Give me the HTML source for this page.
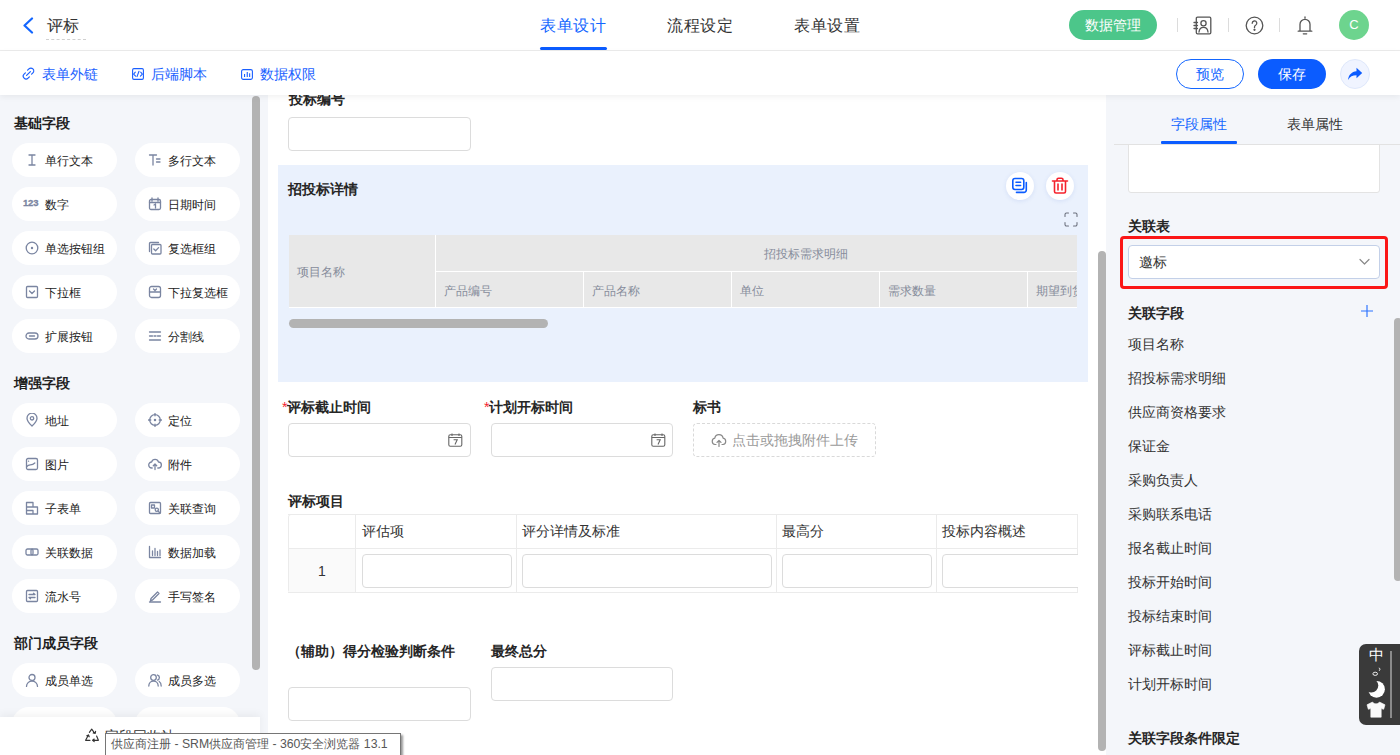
<!DOCTYPE html>
<html><head><meta charset="utf-8">
<style>
*{box-sizing:border-box;margin:0;padding:0}
html,body{width:1400px;height:755px;overflow:hidden;background:#fff;font-family:"Liberation Sans",sans-serif;color:#333}
.a{position:absolute;white-space:nowrap}
.t14{font-size:14px;line-height:20px}
.b{font-weight:bold}
/* header */
#hdr{position:absolute;left:0;top:0;width:1400px;height:51px;background:#fff;border-bottom:1px solid #ececec}
#tb{position:absolute;left:0;top:51px;width:1400px;height:44px;background:#fff;z-index:3;box-shadow:0 2px 6px rgba(0,0,0,0.06)}
#left{position:absolute;left:0;top:95px;width:268px;height:660px;background:#f4f6fa;overflow:hidden}
#canvas{position:absolute;left:268px;top:95px;width:838px;height:660px;background:#fff;overflow:hidden}
#right{position:absolute;left:1106px;top:95px;width:294px;height:660px;background:#f4f6fa;overflow:hidden}
.pill{position:absolute;width:105px;height:34px;border-radius:17px;background:#fff}
.pill span{position:absolute;left:32px;top:7px;font-size:13px;line-height:20px;color:#222}
.pill i{position:absolute;left:12px;top:10px;width:14px;height:14px}
.pill span{position:absolute;left:32px;top:1px;font-size:12px;line-height:34px;color:#222}
.sec{position:absolute;left:14px;font-size:14px;font-weight:bold;color:#1f1f1f;line-height:20px}
.inp{position:absolute;height:34px;border:1px solid #dcdcdc;border-radius:4px;background:#fff}
.lbl{position:absolute;font-size:14px;font-weight:bold;color:#262626;line-height:20px}
.star{color:#f5222d;font-weight:normal}
.rl{left:1128px;font-size:14px;line-height:20px;color:#333}
.tc{font-size:14px;line-height:20px;color:#333}
.th{font-size:12px;line-height:16px;color:#868c9b}
.pill i{font-style:normal}
.pr i{left:13px}.pr span{left:33px}.pl i{left:13px}.pl span{left:33px}
.gt{position:absolute;left:0;top:0;border-collapse:collapse;table-layout:fixed;width:808px}
.gt td{border:1px solid #ececec;font-size:14px;color:#333;padding:0 0 0 6px;vertical-align:middle;position:relative}
.gt td.num{background:#fafafa;text-align:center;padding:0}
.ci{width:150px;height:34px;border:1px solid #dcdcdc;border-radius:4px;background:#fff}
</style></head><body>
<div id="hdr">
  <svg class="a" style="left:22px;top:17px" width="12" height="17" viewBox="0 0 12 17"><path d="M10 1.5 L2.5 8.5 L10 15.5" fill="none" stroke="#1366ff" stroke-width="2.2" stroke-linecap="round" stroke-linejoin="round"/></svg>
  <div class="a" style="left:47px;top:16px;font-size:16px;line-height:20px;color:#333">评标</div>
  <div class="a" style="left:46px;top:39px;width:40px;border-top:1px dashed #d0d0d0"></div>
  <div class="a" style="left:540px;top:16px;font-size:16px;letter-spacing:0.6px;line-height:20px;color:#1366ff">表单设计</div>
  <div class="a" style="left:540px;top:47px;width:67px;height:3px;border-radius:2px;background:#0b5cff"></div>
  <div class="a" style="left:667px;top:16px;font-size:16px;letter-spacing:0.6px;line-height:20px;color:#333">流程设定</div>
  <div class="a" style="left:794px;top:16px;font-size:16px;letter-spacing:0.6px;line-height:20px;color:#333">表单设置</div>
  <div class="a" style="left:1069px;top:10px;width:88px;height:30px;border-radius:15px;background:#4cc68a;color:#fff;font-size:14px;line-height:30px;text-align:center">数据管理</div>
  <div class="a" style="left:1177px;top:18px;width:1px;height:14px;background:#dcdcdc"></div>
  <div class="a" style="left:1228px;top:18px;width:1px;height:14px;background:#dcdcdc"></div>
  <div class="a" style="left:1279px;top:18px;width:1px;height:14px;background:#dcdcdc"></div>

  <svg class="a" style="left:1193px;top:16px" width="19" height="19" viewBox="0 0 19 19" fill="none" stroke="#555" stroke-width="1.3" stroke-linecap="round" stroke-linejoin="round"><rect x="3.3" y="1.2" width="14.5" height="16.6" rx="1.2"/><path d="M1 6.5h3.5M1 9.5h3.5M1 12.5h3.5"/><circle cx="10.5" cy="7.3" r="2.6"/><path d="M6 16c0.3-2.8 2.1-4.6 4.5-4.6s4.2 1.8 4.5 4.6"/></svg>
  <svg class="a" style="left:1245px;top:16px" width="19" height="19" viewBox="0 0 19 19" fill="none" stroke="#555" stroke-width="1.3" stroke-linecap="round"><circle cx="9.5" cy="9.5" r="8.3"/><path d="M7.2 7.3a2.3 2.3 0 1 1 3.4 2c-0.8 0.5-1.1 0.9-1.1 1.8v0.6"/><circle cx="9.5" cy="13.8" r="0.5" fill="#555"/></svg>
  <svg class="a" style="left:1297px;top:16px" width="16" height="19" viewBox="0 0 16 19" fill="none" stroke="#555" stroke-width="1.3" stroke-linecap="round" stroke-linejoin="round"><path d="M8 1v1.3M3 15V8.3a5 5 0 0 1 10 0V15M1.2 15.2h13.6M6.3 17.8h3.4"/></svg>
  <div class="a" style="left:1339px;top:10px;width:30px;height:30px;border-radius:15px;background:#6dd48e;color:#fff;font-size:13px;line-height:30px;text-align:center">C</div>
</div>
<div id="tb">
  <div class="a t14" style="left:42px;top:13px;color:#1a5fff">表单外链</div>
  <div class="a t14" style="left:151px;top:13px;color:#1a5fff">后端脚本</div>
  <div class="a t14" style="left:260px;top:13px;color:#1a5fff">数据权限</div>
  <div class="a" style="left:1176px;top:8px;width:68px;height:30px;border-radius:15px;border:1px solid #1366ff;color:#1366ff;font-size:14px;line-height:28px;text-align:center">预览</div>
  <div class="a" style="left:1258px;top:8px;width:68px;height:30px;border-radius:15px;background:#0b5cff;color:#fff;font-size:14px;line-height:30px;text-align:center">保存</div>
  <div class="a" style="left:1340px;top:8px;width:30px;height:30px;border-radius:15px;background:#f0f4ff;border:1px solid #dfe8fb"></div>

  <svg class="a" style="left:22px;top:16px" width="13" height="13" viewBox="0 0 13 13" fill="none" stroke="#1a5fff" stroke-width="1.2" stroke-linecap="round"><path d="M5.6 3.2l1.3-1.3a2.8 2.8 0 0 1 4 4L9.6 7.2M7.4 9.8L6.1 11.1a2.8 2.8 0 0 1-4-4L3.4 5.8M4.6 8.4l3.8-3.8"/></svg>
  <svg class="a" style="left:132px;top:17px" width="12" height="12" viewBox="0 0 12 12" fill="none" stroke="#1a5fff" stroke-width="1.1" stroke-linecap="round" stroke-linejoin="round"><rect x="0.6" y="0.6" width="10.8" height="10.8" rx="1.3"/><path d="M3.3 4.2L1.6 6.1l2 2M8.7 4.2l1.7 1.9-2 2M7 3.2L5 8.6"/></svg>
  <svg class="a" style="left:241px;top:18px" width="12" height="11" viewBox="0 0 12 11"><rect x="0.6" y="0.6" width="10.8" height="9.8" rx="1.6" fill="none" stroke="#1a5fff" stroke-width="1.1"/><rect x="3" y="5" width="1.1" height="3" fill="#1a5fff"/><rect x="5.7" y="3" width="1.1" height="5" fill="#1a5fff"/><rect x="8.1" y="4.3" width="1.1" height="3.7" fill="#1a5fff"/></svg>
  <svg class="a" style="left:1347px;top:16px" width="16" height="14" viewBox="0 0 16 14" fill="#0b5cff"><path d="M9.5 0.8L15.2 6 9.5 11.2V8.2C5.5 8.2 3 9.5 1 13c0.6-5.2 3.5-8.3 8.5-8.8z"/></svg>
</div>
<div id="left">
<div class="sec" style="top:18px">基础字段</div>
<div class="pill pl" style="left:12px;top:48px"><i><svg width="14" height="14" viewBox="0 0 14 14" fill="none" stroke="#7a85a1" stroke-width="1.3" stroke-linecap="round" stroke-linejoin="round"><path d="M4 2h6M4 12h6M7 2v10"/></svg></i><span>单行文本</span></div>
<div class="pill pr" style="left:135px;top:48px"><i><svg width="14" height="14" viewBox="0 0 14 14" fill="none" stroke="#7a85a1" stroke-width="1.3" stroke-linecap="round" stroke-linejoin="round"><path d="M1.5 2h7M5 2v10M8.5 6h3.5M8.5 9h3.5"/></svg></i><span>多行文本</span></div>
<div class="pill pl" style="left:12px;top:92px"><i><span style="position:absolute;left:-2px;top:-1px;font-size:9.5px;font-weight:bold;color:#7a85a1;line-height:14px;letter-spacing:-0.2px;-webkit-text-stroke:0.3px #7a85a1">123</span></i><span>数字</span></div>
<div class="pill pr" style="left:135px;top:92px"><i><svg width="14" height="14" viewBox="0 0 14 14" fill="none" stroke="#7a85a1" stroke-width="1.3" stroke-linecap="round" stroke-linejoin="round"><rect x="1.5" y="2.5" width="11" height="10" rx="1.5"/><path d="M4 1v3M10 1v3M1.5 5.5h11M6 8l1.5-1v4"/></svg></i><span>日期时间</span></div>
<div class="pill pl" style="left:12px;top:136px"><i><svg width="14" height="14" viewBox="0 0 14 14" fill="none" stroke="#7a85a1" stroke-width="1.3" stroke-linecap="round" stroke-linejoin="round"><circle cx="7" cy="7" r="5.8"/><circle cx="7" cy="7" r="1.2" fill="#7a85a1" stroke="none"/></svg></i><span>单选按钮组</span></div>
<div class="pill pr" style="left:135px;top:136px"><i><svg width="14" height="14" viewBox="0 0 14 14" fill="none" stroke="#7a85a1" stroke-width="1.3" stroke-linecap="round" stroke-linejoin="round"><path d="M1.5 10.5V2.5a1 1 0 0 1 1-1h8"/><rect x="3.5" y="3.5" width="9.5" height="9.5" rx="1"/><path d="M5.8 8l1.8 1.8 3-3.2"/></svg></i><span>复选框组</span></div>
<div class="pill pl" style="left:12px;top:180px"><i><svg width="14" height="14" viewBox="0 0 14 14" fill="none" stroke="#7a85a1" stroke-width="1.3" stroke-linecap="round" stroke-linejoin="round"><rect x="1.5" y="1.5" width="11" height="11" rx="1"/><path d="M4.5 6l2.5 2.5L9.5 6"/></svg></i><span>下拉框</span></div>
<div class="pill pr" style="left:135px;top:180px"><i><svg width="14" height="14" viewBox="0 0 14 14" fill="none" stroke="#7a85a1" stroke-width="1.3" stroke-linecap="round" stroke-linejoin="round"><rect x="1.5" y="1.5" width="11" height="11" rx="2"/><path d="M1.5 7h11M5.5 4l1.5 1.5L8.5 4"/></svg></i><span>下拉复选框</span></div>
<div class="pill pl" style="left:12px;top:224px"><i><svg width="14" height="14" viewBox="0 0 14 14" fill="none" stroke="#7a85a1" stroke-width="1.3" stroke-linecap="round" stroke-linejoin="round"><rect x="1" y="4" width="12" height="6" rx="3"/><path d="M4.5 7h5"/></svg></i><span>扩展按钮</span></div>
<div class="pill pr" style="left:135px;top:224px"><i><svg width="14" height="14" viewBox="0 0 14 14" fill="none" stroke="#7a85a1" stroke-width="1.3" stroke-linecap="round" stroke-linejoin="round"><path d="M1.5 3h11M1.5 11h11M1.5 7h3M6 7h2M9.5 7h3"/></svg></i><span>分割线</span></div>
<div class="sec" style="top:278px">增强字段</div>
<div class="pill pl" style="left:12px;top:308px"><i><svg width="14" height="14" viewBox="0 0 14 14" fill="none" stroke="#7a85a1" stroke-width="1.3" stroke-linecap="round" stroke-linejoin="round"><path d="M7 13s-5-4.6-5-7.8A5 5 0 0 1 12 5.2C12 8.4 7 13 7 13z"/><circle cx="7" cy="5.3" r="1.7"/></svg></i><span>地址</span></div>
<div class="pill pr" style="left:135px;top:308px"><i><svg width="14" height="14" viewBox="0 0 14 14" fill="none" stroke="#7a85a1" stroke-width="1.3" stroke-linecap="round" stroke-linejoin="round"><circle cx="7" cy="7" r="5.3"/><path d="M7 0.5v2.3M7 11.2v2.3M0.5 7h2.3M11.2 7h2.3"/><circle cx="7" cy="7" r="0.6" fill="#7a85a1"/></svg></i><span>定位</span></div>
<div class="pill pl" style="left:12px;top:352px"><i><svg width="14" height="14" viewBox="0 0 14 14" fill="none" stroke="#7a85a1" stroke-width="1.3" stroke-linecap="round" stroke-linejoin="round"><rect x="1.5" y="1.5" width="11" height="11" rx="1.5"/><path d="M1.8 9.5c2.5-3 4.5 0 8-3.5M3.5 4.2h.1"/></svg></i><span>图片</span></div>
<div class="pill pr" style="left:135px;top:352px"><i><svg width="14" height="14" viewBox="0 0 14 14" fill="none" stroke="#7a85a1" stroke-width="1.3" stroke-linecap="round" stroke-linejoin="round"><path d="M4.2 11H3.8A3 3 0 0 1 3.6 5a3.6 3.6 0 0 1 6.9 0A3 3 0 0 1 10.2 11H9.8M7 7v5.5M5.3 8.7L7 7l1.7 1.7"/></svg></i><span>附件</span></div>
<div class="pill pl" style="left:12px;top:396px"><i><svg width="14" height="14" viewBox="0 0 14 14" fill="none" stroke="#7a85a1" stroke-width="1.3" stroke-linecap="round" stroke-linejoin="round"><path d="M1.5 13V1.5h6.5V6M1.5 6h11v7h-11M1.5 9.5h6.5V13"/></svg></i><span>子表单</span></div>
<div class="pill pr" style="left:135px;top:396px"><i><svg width="14" height="14" viewBox="0 0 14 14" fill="none" stroke="#7a85a1" stroke-width="1.3" stroke-linecap="round" stroke-linejoin="round"><rect x="1.5" y="1.5" width="11" height="11" rx="1"/><rect x="3.5" y="4" width="3" height="3"/><circle cx="8.8" cy="8.8" r="1.6"/><path d="M10 10l2 2"/></svg></i><span>关联查询</span></div>
<div class="pill pl" style="left:12px;top:440px"><i><svg width="14" height="14" viewBox="0 0 14 14" fill="none" stroke="#7a85a1" stroke-width="1.3" stroke-linecap="round" stroke-linejoin="round"><rect x="1" y="4" width="7" height="6" rx="1.5"/><rect x="6" y="4" width="7" height="6" rx="1.5"/></svg></i><span>关联数据</span></div>
<div class="pill pr" style="left:135px;top:440px"><i><svg width="14" height="14" viewBox="0 0 14 14" fill="none" stroke="#7a85a1" stroke-width="1.3" stroke-linecap="round" stroke-linejoin="round"><path d="M1.5 1.5v11h11M4.5 6v4.5M7 3.5v7M9.5 6.5v4M12 5v5.5"/></svg></i><span>数据加载</span></div>
<div class="pill pl" style="left:12px;top:484px"><i><svg width="14" height="14" viewBox="0 0 14 14" fill="none" stroke="#7a85a1" stroke-width="1.3" stroke-linecap="round" stroke-linejoin="round"><rect x="1.5" y="1.5" width="11" height="11" rx="1"/><path d="M4 5.5h6l-1.5-1.2M10 8.5H4l1.5 1.2"/></svg></i><span>流水号</span></div>
<div class="pill pr" style="left:135px;top:484px"><i><svg width="14" height="14" viewBox="0 0 14 14" fill="none" stroke="#7a85a1" stroke-width="1.3" stroke-linecap="round" stroke-linejoin="round"><path d="M3 9.5l6.5-6.5 1.5 1.5L4.5 11 2.5 11.5zM1.5 13h11"/></svg></i><span>手写签名</span></div>
<div class="sec" style="top:538px">部门成员字段</div>
<div class="pill pl" style="left:12px;top:568px"><i><svg width="14" height="14" viewBox="0 0 14 14" fill="none" stroke="#7a85a1" stroke-width="1.3" stroke-linecap="round" stroke-linejoin="round"><circle cx="7" cy="4.5" r="3"/><path d="M1.5 13.5c0-3 2.5-5.5 5.5-5.5s5.5 2.5 5.5 5.5"/></svg></i><span>成员单选</span></div>
<div class="pill pr" style="left:135px;top:568px"><i><svg width="14" height="14" viewBox="0 0 14 14" fill="none" stroke="#7a85a1" stroke-width="1.3" stroke-linecap="round" stroke-linejoin="round"><circle cx="5.5" cy="4.5" r="2.8"/><path d="M0.8 13c0-2.8 2.1-5 4.7-5s4.7 2.2 4.7 5M9.5 2a2.6 2.6 0 0 1 0 5M11.2 8.5c1.3 0.8 2 2.5 2 4.5"/></svg></i><span>成员多选</span></div>
<div class="pill pl" style="left:12px;top:612px"><i></i><span></span></div>
<div class="pill pr" style="left:135px;top:612px"><i></i><span></span></div>
</div>
<div id="canvas"></div>
<!-- canvas -->
<div class="lbl" style="left:289px;top:89px">投标编号</div>
<div class="inp" style="left:288px;top:117px;width:183px"></div>
<div class="a" style="left:278px;top:165px;width:810px;height:217px;background:#eaf1fd"></div>
<div class="lbl" style="left:288px;top:179px">招投标详情</div>
<div class="a" style="left:1006px;top:172px;width:28px;height:28px;border-radius:14px;background:#fff;box-shadow:0 1px 4px rgba(60,100,200,0.12)"></div>
<svg class="a" style="left:1011px;top:177px" width="18" height="18" viewBox="0 0 18 18" fill="none" stroke="#0b5cff" stroke-width="1.6" stroke-linecap="round" stroke-linejoin="round"><rect x="1.8" y="1.5" width="11" height="11" rx="2.2"/><path d="M5 5.3h4.6M5 8.5h4.6M15.3 5.5v7.5a2.4 2.4 0 0 1-2.4 2.4H5.5"/></svg>
<div class="a" style="left:1046px;top:172px;width:28px;height:28px;border-radius:14px;background:#fff;box-shadow:0 1px 4px rgba(60,100,200,0.12)"></div>
<svg class="a" style="left:1051px;top:177px" width="18" height="18" viewBox="0 0 18 18" fill="none" stroke="#f5222d" stroke-width="1.6" stroke-linecap="round" stroke-linejoin="round"><path d="M1.5 4h15M6 4V2.8a1.5 1.5 0 0 1 1.5-1.5h3a1.5 1.5 0 0 1 1.5 1.5V4M3.5 4v10.5a1.5 1.5 0 0 0 1.5 1.5h8a1.5 1.5 0 0 0 1.5-1.5V4M7 7v6M11 7v6"/></svg>
<svg class="a" style="left:1064px;top:212px" width="14" height="15" viewBox="0 0 14 15" fill="none" stroke="#6a6f7c" stroke-width="1.05" stroke-linecap="round"><path d="M1 4.5V2.5A1.5 1.5 0 0 1 2.5 1H4.5M9.5 1h2A1.5 1.5 0 0 1 13 2.5v2M13 10.5v2a1.5 1.5 0 0 1-1.5 1.5h-2M4.5 14h-2A1.5 1.5 0 0 1 1 12.5v-2"/></svg>
<div class="a" style="left:289px;top:235px;width:788px;height:73px;overflow:hidden;background:#fff">
  <div class="a" style="left:0;top:0;width:146px;height:72px;background:#e8e8e8"></div>
  <div class="a" style="left:147px;top:0;width:800px;height:36px;background:#e8e8e8"></div>
  <div class="a th" style="left:8px;top:29px">项目名称</div>
  <div class="a th" style="left:475px;top:11px">招投标需求明细</div>
  <div class="a" style="left:147px;top:37px;width:147px;height:35px;background:#e8e8e8"></div>
  <div class="a" style="left:295px;top:37px;width:147px;height:35px;background:#e8e8e8"></div>
  <div class="a" style="left:443px;top:37px;width:147px;height:35px;background:#e8e8e8"></div>
  <div class="a" style="left:591px;top:37px;width:147px;height:35px;background:#e8e8e8"></div>
  <div class="a" style="left:739px;top:37px;width:147px;height:35px;background:#e8e8e8"></div>
  <div class="a th" style="left:155px;top:48px">产品编号</div>
  <div class="a th" style="left:303px;top:48px">产品名称</div>
  <div class="a th" style="left:451px;top:48px">单位</div>
  <div class="a th" style="left:599px;top:48px">需求数量</div>
  <div class="a th" style="left:747px;top:48px">期望到货日期</div>
</div>
<div class="a" style="left:289px;top:319px;width:259px;height:9px;border-radius:5px;background:#b3b3b3"></div>

<div class="lbl" style="left:282px;top:397px"><span class="star">*</span>评标截止时间</div>
<div class="inp" style="left:288px;top:423px;width:183px"></div>
<svg class="a" style="left:448px;top:433px" width="15" height="14" viewBox="0 0 15 14" fill="none" stroke="#666" stroke-width="1.1"><rect x="0.8" y="1.8" width="13" height="11.5" rx="1.5"/><path d="M0.8 4.5h13M4 0.5v2.5M11 0.5v2.5M5.6 6.8h3.6L7 11.5"/></svg>
<div class="lbl" style="left:484px;top:397px"><span class="star">*</span>计划开标时间</div>
<div class="inp" style="left:491px;top:423px;width:182px"></div>
<svg class="a" style="left:651px;top:433px" width="15" height="14" viewBox="0 0 15 14" fill="none" stroke="#666" stroke-width="1.1"><rect x="0.8" y="1.8" width="13" height="11.5" rx="1.5"/><path d="M0.8 4.5h13M4 0.5v2.5M11 0.5v2.5M5.6 6.8h3.6L7 11.5"/></svg>
<div class="lbl" style="left:693px;top:397px">标书</div>
<div class="a" style="left:693px;top:423px;width:183px;height:34px;border:1px dashed #d9d9d9;border-radius:4px"></div>
<svg class="a" style="left:711px;top:433px" width="16" height="14" viewBox="0 0 16 14" fill="none" stroke="#888" stroke-width="1.2" stroke-linecap="round" stroke-linejoin="round"><path d="M5 11.5H4A3.2 3.2 0 0 1 3.8 5.2a4.2 4.2 0 0 1 8.3 0A3.2 3.2 0 0 1 12 11.5h-1M8 7.5v6M6 9.3L8 7.3l2 2"/></svg>
<div class="a" style="left:732px;top:430px;font-size:14px;line-height:20px;color:#9a9a9a">点击或拖拽附件上传</div>

<div class="lbl" style="left:288px;top:491px">评标项目</div>
<div class="a" style="left:288px;top:514px;width:790px;height:79px;overflow:hidden">
  <div class="a" style="left:0;top:0;width:68px;height:79px;border:1px solid #ebebeb;border-radius:3px 0 0 3px"></div>
  <div class="a" style="left:1px;top:35px;width:66px;height:43px;background:#fafafa"></div>
  <div class="a" style="left:0;top:0;width:900px;height:79px;border-top:1px solid #ebebeb;border-bottom:1px solid #ebebeb"></div>
  <div class="a" style="left:68px;top:34px;width:900px;height:1px;background:#ebebeb"></div>
  <div class="a" style="left:0;top:34px;width:68px;height:1px;background:#ebebeb"></div>
  <div class="a" style="left:67px;top:0;width:1px;height:79px;background:#ebebeb"></div>
  <div class="a" style="left:228px;top:0;width:1px;height:79px;background:#ebebeb"></div>
  <div class="a" style="left:488px;top:0;width:1px;height:79px;background:#ebebeb"></div>
  <div class="a" style="left:648px;top:0;width:1px;height:79px;background:#ebebeb"></div>
  <div class="a" style="left:789px;top:0;width:1px;height:79px;background:#ebebeb"></div>
  <div class="a tc" style="left:74px;top:7px">评估项</div>
  <div class="a tc" style="left:234px;top:7px">评分详情及标准</div>
  <div class="a tc" style="left:494px;top:7px">最高分</div>
  <div class="a tc" style="left:654px;top:7px">投标内容概述</div>
  <div class="a tc" style="left:30px;top:47px">1</div>
  <div class="inp" style="left:74px;top:40px;width:150px"></div>
  <div class="inp" style="left:234px;top:40px;width:250px"></div>
  <div class="inp" style="left:494px;top:40px;width:150px"></div>
  <div class="inp" style="left:654px;top:40px;width:150px"></div>
</div>

<div class="lbl" style="left:287px;top:641px">（辅助）得分检验判断条件</div>
<div class="inp" style="left:288px;top:687px;width:183px"></div>
<div class="lbl" style="left:491px;top:641px">最终总分</div>
<div class="inp" style="left:491px;top:667px;width:182px"></div>
<div class="a" style="left:1098px;top:251px;width:8px;height:500px;border-radius:4px;background:#b3b3b3"></div>

<div id="right"></div>
<!-- right panel -->
<div class="a" style="left:1128px;top:140px;width:252px;height:53px;background:#fff;border:1px solid #e3e3e3;border-radius:3px"></div>
<div class="a" style="left:1106px;top:95px;width:294px;height:49px;background:#f4f6fa"></div>
<div class="a" style="left:1114px;top:144px;width:286px;height:1px;background:#e2e2e2"></div>
<div class="a" style="left:1171px;top:114px;font-size:14px;line-height:20px;color:#1366ff">字段属性</div>
<div class="a" style="left:1161px;top:141px;width:76px;height:3px;background:#0b5cff;border-radius:1px"></div>
<div class="a" style="left:1287px;top:114px;font-size:14px;line-height:20px;color:#333">表单属性</div>
<div class="lbl" style="left:1128px;top:216px">关联表</div>
<div class="a" style="left:1120px;top:236px;width:268px;height:53px;border:3px solid #fb1616;border-radius:4px"></div>
<div class="a" style="left:1128px;top:245px;width:252px;height:34px;background:#fff;border:1px solid #c3d0e8;border-radius:4px"></div>
<div class="a" style="left:1139px;top:252px;font-size:14px;line-height:20px;color:#333">邀标</div>
<svg class="a" style="left:1359px;top:258px" width="11" height="8" viewBox="0 0 11 8" fill="none" stroke="#8a8a8a" stroke-width="1.2" stroke-linecap="round" stroke-linejoin="round"><path d="M1 1.5l4.5 4.5L10 1.5"/></svg>
<div class="lbl" style="left:1128px;top:303px">关联字段</div>
<svg class="a" style="left:1360px;top:304px" width="14" height="14" viewBox="0 0 14 14" fill="none" stroke="#2a72ff" stroke-width="1.15"><path d="M7 1v12M1 7h12"/></svg>
<div class="a rl" style="top:334px">项目名称</div>
<div class="a rl" style="top:368px">招投标需求明细</div>
<div class="a rl" style="top:402px">供应商资格要求</div>
<div class="a rl" style="top:436px">保证金</div>
<div class="a rl" style="top:470px">采购负责人</div>
<div class="a rl" style="top:504px">采购联系电话</div>
<div class="a rl" style="top:538px">报名截止时间</div>
<div class="a rl" style="top:572px">投标开始时间</div>
<div class="a rl" style="top:606px">投标结束时间</div>
<div class="a rl" style="top:640px">评标截止时间</div>
<div class="a rl" style="top:674px">计划开标时间</div>
<div class="lbl" style="left:1128px;top:728px">关联字段条件限定</div>
<div class="a" style="left:1394px;top:318px;width:8px;height:263px;border-radius:4px;background:#b3b3b3"></div>

<!-- overlays -->
<div class="a" style="left:252px;top:96px;width:8px;height:574px;border-radius:4px;background:#b3b3b3"></div>
<div class="a" style="left:0;top:717px;width:260px;height:38px;background:#fff;box-shadow:0 -3px 8px rgba(0,0,0,0.05)"></div>
<svg class="a" style="left:80px;top:724px" width="24" height="22" viewBox="0 0 24 22" fill="none" stroke="#333" stroke-width="1.15" stroke-linecap="round" stroke-linejoin="round"><path d="M9.4 8.4L11.7 5.2L14.6 9.2M13.2 9L15.2 9.4 15.6 7.4M8.3 11.2L5.6 16.3H10M6.8 11.7L8.5 10.9 9.2 12.8M16.6 12L18.4 16.3H12.6M14.2 15L12.6 16.3 14.2 17.6"/></svg>
<div class="a" style="left:105px;top:726px;font-size:14px;line-height:20px;color:#333">字段回收站</div>
<div class="a" style="left:105px;top:733px;width:296px;height:24px;background:#fff;border:1px solid #767676;box-shadow:2px 2px 2px rgba(0,0,0,0.4)"></div>
<div class="a" style="left:111px;top:736px;font-size:12.25px;line-height:16px;color:#575757">供应商注册 - SRM供应商管理 - 360安全浏览器 13.1</div>
<div class="a" style="left:1359px;top:644px;width:48px;height:81px;border-radius:7px;background:#3a3a3a"></div>
<div class="a" style="left:1390px;top:651px;width:2px;height:67px;background:#8a8a8a"></div>
<div class="a" style="left:1369px;top:645px;font-size:15px;line-height:20px;color:#fff">中</div>
<svg class="a" style="left:1371px;top:667px" width="12" height="10" viewBox="0 0 12 10" fill="none" stroke="#fff" stroke-width="0.9"><ellipse cx="4.2" cy="6.8" rx="2.3" ry="1.6"/><path d="M7.8 1c1.3 0.2 1.6 1.5 0.4 2.8"/></svg>
<svg class="a" style="left:1367px;top:680px" width="19" height="19" viewBox="0 0 19 19"><circle cx="9.5" cy="9.3" r="8.4" fill="#fff"/><circle cx="4.3" cy="5.6" r="7" fill="#3a3a3a"/></svg>
<svg class="a" style="left:1366px;top:701px" width="20" height="17" viewBox="0 0 20 17"><path d="M6.5 1L1 3.8 2.3 8.3 4.8 7.6V16.2h10.4V7.6l2.5 0.7L19 3.8 13.5 1C12.8 2.2 11.5 2.8 10 2.8S7.2 2.2 6.5 1z" fill="#fafafa" stroke="#fafafa" stroke-width="0.6" stroke-linejoin="round"/></svg>
</body></html>
